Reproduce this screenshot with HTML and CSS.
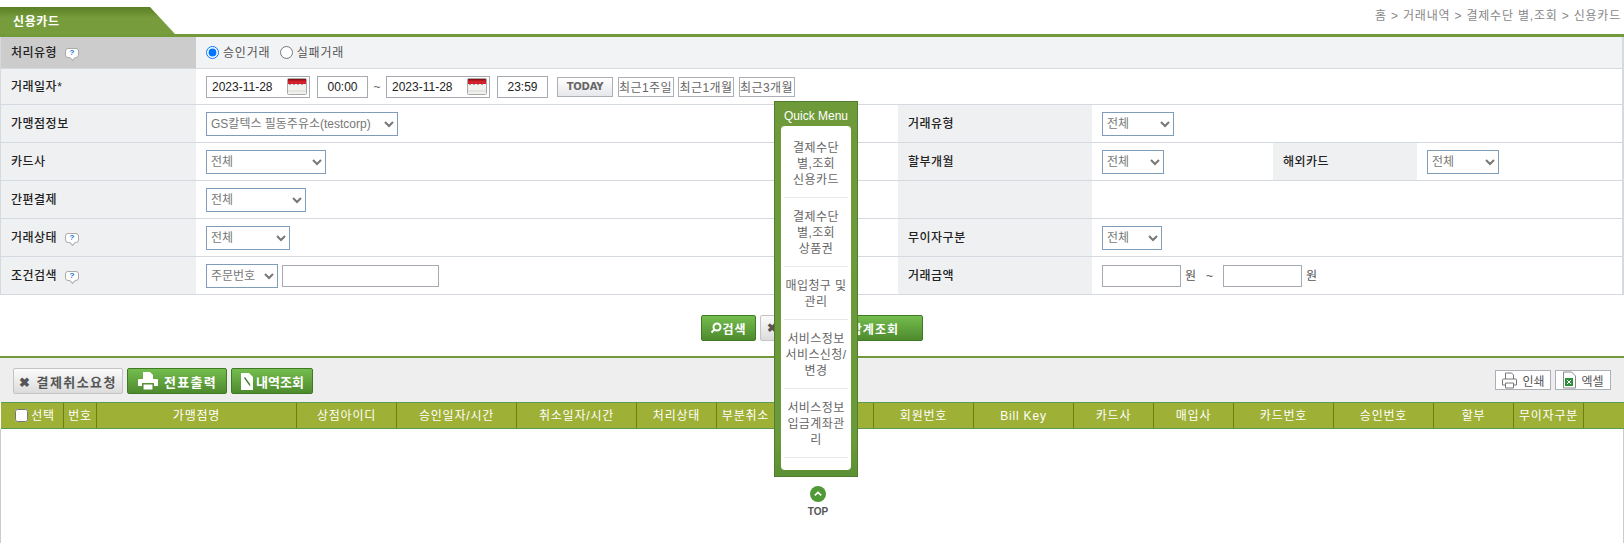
FILE: index.html
```html
<!DOCTYPE html>
<html lang="ko">
<head>
    <meta charset="UTF-8">
    <title>신용카드</title>
    <link rel="stylesheet" href="styles.css">
</head>
<body>
    <svg class="defs" width="0" height="0">
        <symbol id="cal" viewBox="0 0 20 17">
            <rect x=".5" y=".5" width="19" height="16" rx="1" fill="#f1f1ee" stroke="#aaa"/>
            <rect x="1" y="1" width="18" height="5" fill="#d3202a"/>
            <path d="M1 1h18v1.500H1z" fill="#8c1218"/>
            <path d="M3 6v1M7 6v1M11 6v1M15 6v1" stroke="#555"/>
            <path d="M1 13h18" stroke="#d8d8d4"/>
        </symbol>
    </svg>

    <div class="top-bar">
        <h1 class="tab">신용카드</h1>
        <div class="crumbs">홈 &gt; 거래내역 &gt; 결제수단 별,조회 &gt; 신용카드</div>
    </div>

    <table class="search-table">
        <colgroup>
            <col class="col-label"><col class="col-value"><col class="col-label2"><col class="col-value2"><col class="col-label3"><col>
        </colgroup>
        <tr class="row-first">
            <th class="th-first">처리유형 <span class="help">?</span></th>
            <td colspan="5" class="td-first">
                <label class="radio"><input type="radio" name="kind" checked>승인거래</label>
                <label class="radio"><input type="radio" name="kind">실패거래</label>
            </td>
        </tr>
        <tr class="row-date">
            <th>거래일자*</th>
            <td colspan="5">
                <div class="line">
                    <span class="date-box"><input type="text" value="2023-11-28"><svg class="cal"><use href="#cal"/></svg></span>
                    <input class="time" type="text" value="00:00">
                    <span class="tilde">~</span>
                    <span class="date-box"><input type="text" value="2023-11-28"><svg class="cal"><use href="#cal"/></svg></span>
                    <input class="time time-end" type="text" value="23:59">
                    <button class="today" type="button">TODAY</button>
                    <button class="recent" type="button">최근1주일</button>
                    <button class="recent" type="button">최근1개월</button>
                    <button class="recent" type="button">최근3개월</button>
                </div>
            </td>
        </tr>
        <tr>
            <th>가맹점정보</th>
            <td><select class="w192"><option>GS칼텍스 필동주유소(testcorp)</option></select></td>
            <th>거래유형</th>
            <td colspan="3"><select class="w72"><option>전체</option></select></td>
        </tr>
        <tr>
            <th>카드사</th>
            <td><select class="w120"><option>전체</option></select></td>
            <th>할부개월</th>
            <td><select class="w62"><option>전체</option></select></td>
            <th>해외카드</th>
            <td><select class="w72"><option>전체</option></select></td>
        </tr>
        <tr>
            <th>간편결제</th>
            <td><select class="w100"><option>전체</option></select></td>
            <th></th>
            <td colspan="3"></td>
        </tr>
        <tr>
            <th>거래상태 <span class="help">?</span></th>
            <td><select class="w84"><option>전체</option></select></td>
            <th>무이자구분</th>
            <td colspan="3"><select class="w60"><option>전체</option></select></td>
        </tr>
        <tr>
            <th>조건검색 <span class="help">?</span></th>
            <td>
                <div class="line">
                    <select class="w72"><option>주문번호</option></select>
                    <input class="keyword" type="text">
                </div>
            </td>
            <th>거래금액</th>
            <td colspan="3">
                <div class="line amount-line">
                    <input class="amount" type="text"><span>원</span>
                    <span class="amount-tilde">~</span>
                    <input class="amount" type="text"><span>원</span>
                </div>
            </td>
        </tr>
    </table>

    <div class="actions">
        <button class="btn green btn-search" type="button">
            <svg width="12" height="12" viewBox="0 0 12 12"><circle cx="7" cy="5" r="3.500" fill="none" stroke="#fff" stroke-width="2"/><path d="M4.500 7.500L1.500 10.500" stroke="#fff" stroke-width="2"/></svg>검색
        </button>
        <button class="btn gray btn-reset" type="button">✖</button>
        <button class="btn green btn-sum" type="button">합계조회</button>
    </div>

    <section class="result">
        <div class="toolbar">
            <button class="btn gray btn-cancel" type="button">✖ 결제취소요청</button>
            <button class="btn green btn-slip" type="button">
                <svg width="22" height="20" viewBox="0 0 22 20"><path d="M6 1h7l3 3v4H6z" fill="#fff"/><path d="M2 8h18a1 1 0 0 1 1 1v6h-4v-3H5v3H1V9a1 1 0 0 1 1-1z" fill="#fff"/><path d="M6 13h10v6H6z" fill="#fff" stroke="#4f8a30"/></svg>전표출력
            </button>
            <button class="btn green btn-list" type="button">
                <svg width="14" height="19" viewBox="0 0 14 19"><path d="M1 1h8l4 4v13H1z" fill="#fff"/><path d="M4 6l5 7 1.500 1.500-.5-2.500-5-7z" fill="#3e7a25"/></svg>내역조회
            </button>
            <div class="toolbar-right">
                <button class="small-btn" type="button">
                    <svg width="17" height="17" viewBox="0 0 17 17"><path d="M4.500 7V1h6l2 2v4M4.500 13h-3V8a1 1 0 0 1 1-1h12a1 1 0 0 1 1 1v5h-3M4.500 11h8v5h-8z" fill="#fff" stroke="#777"/></svg>인쇄
                </button>
                <button class="small-btn" type="button">
                    <svg width="15" height="18" viewBox="0 0 15 18"><path d="M1.500 1h8l4 4v12h-12z" fill="#fff" stroke="#888"/><rect x="3" y="7" width="8" height="8" fill="#2f8f3a"/><path d="M5 9l4 4M9 9l-4 4" stroke="#fff"/></svg>엑셀
                </button>
            </div>
        </div>

        <table class="grid">
            <colgroup>
                <col class="g63"><col class="g33"><col class="g200"><col class="g100"><col class="g120"><col class="g120"><col class="g80"><col class="g58"><col class="g99"><col class="g100"><col class="g100"><col class="g80"><col class="g80"><col class="g100"><col class="g100"><col class="g80"><col class="g70"><col>
            </colgroup>
            <tr>
                <th class="check-cell"><input type="checkbox">선택</th>
                <th>번호</th>
                <th>가맹점명</th>
                <th>상점아이디</th>
                <th>승인일자/시간</th>
                <th>취소일자/시간</th>
                <th>처리상태</th>
                <th>부분취소</th>
                <th></th>
                <th>회원번호</th>
                <th>Bill Key</th>
                <th>카드사</th>
                <th>매입사</th>
                <th>카드번호</th>
                <th>승인번호</th>
                <th>할부</th>
                <th>무이자구분</th>
                <th></th>
            </tr>
        </table>
        <div class="grid-body"></div>
    </section>

    <aside class="quick">
        <div class="quick-panel">
            <div class="quick-title">Quick Menu</div>
            <ul class="quick-list">
                <li>결제수단<br>별,조회<br>신용카드</li>
                <li>결제수단<br>별,조회<br>상품권</li>
                <li>매입청구 및<br>관리</li>
                <li>서비스정보<br>서비스신청/<br>변경</li>
                <li>서비스정보<br>입금계좌관<br>리</li>
            </ul>
        </div>
        <a class="to-top" href="#">
            <svg width="16" height="16" viewBox="0 0 16 16"><circle cx="8" cy="8" r="8" fill="#4f9a37"/><path d="M4.800 9.300L8 6.300l3.200 3" fill="none" stroke="#fff" stroke-width="1.600"/></svg>
            <span>TOP</span>
        </a>
    </aside>
</body>
</html>
```

FILE: styles.css
```css
* {
    box-sizing: border-box;
}
html, body {
    height: 100%;
}
body {
    margin: 0;
    font-family: "Liberation Sans", "Noto Sans CJK KR", sans-serif;
    font-size: 12px;
    line-height: 16px;
    color: #333;
    background: #fff;
    overflow: hidden;
    position: relative;
}
.defs {
    position: absolute;
}
input, select, button {
    font-family: inherit;
    font-size: 12px;
    margin: 0;
}

/* top */
.top-bar {
    display: flex;
    justify-content: space-between;
    align-items: flex-start;
    height: 37px;
    border-bottom: 3px solid #739a3a;
}
.tab {
    width: 175px;
    height: 27px;
    margin: 7px 0 0;
    padding: 7px 0 0 13px;
    font-size: 12px;
    line-height: 16px;
    letter-spacing: .6px;
    color: #fff;
    background: linear-gradient(#5b7f25, #769c3c 40%);
    clip-path: polygon(0 0, 150px 0, 100% 100%, 0 100%);
}
.crumbs {
    padding: 8px 3px 0 0;
    color: #888;
    letter-spacing: .8px;
}

/* search form */
.search-table {
    width: 100%;
    table-layout: fixed;
    border-collapse: separate;
    border-spacing: 0;
    border-left: 1px solid #d4dae0;
    border-right: 2px solid #d4dae0;
}
.col-label { width: 195px; }
.col-value { width: 702px; }
.col-label2 { width: 194px; }
.col-value2 { width: 181px; }
.col-label3 { width: 144px; }
.search-table tr {
    height: 38px;
}
.search-table .row-first {
    height: 32px;
}
.search-table .row-date {
    height: 36px;
}
.search-table th, .search-table td {
    padding: 0 0 0 10px;
    border-bottom: 1px solid #d4dae0;
    text-align: left;
    font-weight: normal;
}
.search-table th {
    padding-top: 1px;
    background: #eff0f2;
    font-weight: 500;
    letter-spacing: .5px;
    color: #222;
}
.search-table .th-first {
    background: #ccc;
}
.search-table .td-first {
    padding-top: 3px;
    background: #f2f3f5;
}
.help {
    display: inline-block;
    position: relative;
    width: 14px;
    height: 10px;
    margin-left: 4px;
    border: 1px solid #aaa;
    border-radius: 3px;
    background: #fff;
    font-family: "Liberation Sans", sans-serif;
    font-size: 8px;
    font-weight: bold;
    line-height: 8px;
    letter-spacing: 0;
    text-align: center;
    color: #0a6fd0;
    vertical-align: 2px;
}
.help::after {
    content: "";
    position: absolute;
    left: 4px;
    bottom: -3px;
    width: 4px;
    height: 4px;
    border-right: 1px solid #aaa;
    border-bottom: 1px solid #aaa;
    background: #fff;
    transform: rotate(45deg);
}
.radio {
    display: inline-flex;
    align-items: center;
    margin-right: 6px;
    color: #555;
    letter-spacing: .8px;
}
.radio input {
    width: 13px;
    height: 13px;
    margin: 0 4px 0 0;
}
.line {
    display: flex;
    align-items: center;
}
.date-box {
    display: flex;
    align-items: center;
    width: 104px;
    height: 22px;
    border: 1px solid #a5abb0;
    background: #fff;
}
.date-box input {
    width: 80px;
    height: 20px;
    padding: 0 0 0 5px;
    border: 0;
    color: #222;
}
.cal {
    width: 20px;
    height: 17px;
}
.time {
    width: 51px;
    height: 22px;
    margin-left: 7px;
    padding: 0;
    border: 1px solid #a5abb0;
    text-align: center;
    color: #222;
}
.tilde {
    width: 18px;
    text-align: center;
    color: #666;
}
.time-end {
    margin-right: 9px;
}
.today, .recent {
    width: 56px;
    height: 20px;
    margin-right: 4.5px;
    padding: 0;
    border: 1px solid #aab0b5;
    color: #666;
}
.today {
    background: linear-gradient(#fff, #e6e7ea);
    font-family: "DejaVu Sans", sans-serif;
    font-size: 10px;
    font-weight: bold;
    letter-spacing: -.2px;
}
.recent {
    background: #fff;
    letter-spacing: .4px;
}
select {
    height: 24px;
    padding: 0;
    border: 1px solid #7f9db9;
    background: #fff;
    color: #777;
}
.w192 { width: 192px; }
.w120 { width: 120px; }
.w100 { width: 100px; }
.w84 { width: 84px; }
.w72 { width: 72px; }
.w62 { width: 62px; }
.w60 { width: 60px; }
.keyword {
    width: 157px;
    height: 22px;
    margin-left: 4px;
    border: 1px solid #a5abb0;
}
.amount {
    width: 79px;
    height: 22px;
    border: 1px solid #a5abb0;
}
.amount-line {
    gap: 4px;
    color: #555;
}
.amount-tilde {
    margin: 0 6px;
}

/* buttons */
.actions {
    display: flex;
    justify-content: center;
    gap: 4px;
    padding-top: 20px;
    height: 61px;
}
.btn {
    display: inline-flex;
    align-items: center;
    justify-content: center;
    height: 26px;
    padding: 0;
    border-radius: 2px;
    font-weight: bold;
    letter-spacing: 1px;
}
.btn.green {
    border: 1px solid #3f7a24;
    background: linear-gradient(#74bd4e, #4e8a2e);
    color: #fff;
}
.btn.gray {
    border: 1px solid #c4c4c4;
    background: linear-gradient(#fbfbfb, #dcdcdc);
    color: #555;
}
.btn-search { width: 55px; }
.btn-reset {
    width: 50px;
    justify-content: flex-start;
    padding-left: 6px;
}
.btn-sum {
    width: 109px;
    justify-content: flex-end;
    padding-right: 23px;
}

/* result */
.result {
    border-top: 2px solid #739a3a;
}
.toolbar {
    display: flex;
    align-items: flex-start;
    gap: 4px;
    height: 44px;
    padding: 10px 13px 0 13px;
    background: #eee;
}
.toolbar .btn {
    font-size: 13px;
}
.toolbar .btn-cancel { width: 110px; letter-spacing: 1.4px; }
.toolbar .btn-slip { width: 100px; gap: 5px; letter-spacing: 1.3px; }
.toolbar .btn-list { width: 82px; gap: 2px; letter-spacing: 0; }
.toolbar-right {
    display: flex;
    gap: 4px;
    margin-left: auto;
    padding-top: 2px;
}
.small-btn {
    display: inline-flex;
    align-items: center;
    justify-content: center;
    gap: 4px;
    width: 56px;
    height: 20px;
    padding: 0;
    border: 1px solid #aab0b5;
    background: #fff;
    color: #555;
}
.grid {
    width: calc(100% - 1px);
    margin-left: 1px;
    table-layout: fixed;
    border-collapse: separate;
    border-spacing: 0;
    border-top: 1px solid #5c9a50;
    border-bottom: 1px solid #5c9a50;
    background: #9fb036;
}
.g63 { width: 63px; }
.g33 { width: 33px; }
.g200 { width: 200px; }
.g100 { width: 100px; }
.g120 { width: 120px; }
.g99 { width: 99px; }
.g80 { width: 80px; }
.g70 { width: 70px; }
.g58 { width: 58px; }
.grid th {
    height: 25px;
    padding: 0;
    border-right: 1px solid #6e7f10;
    font-weight: normal;
    color: #fff;
    letter-spacing: .8px;
    white-space: nowrap;
}
.grid th:last-child {
    border-right: 0;
}
.grid .check-cell {
    padding-left: 6px;
}
.check-cell input {
    width: 13px;
    height: 13px;
    margin: 0 3px 0 0;
    vertical-align: -2px;
}
.grid-body {
    height: 115px;
    border-left: 1px solid #ccc;
    border-right: 1px solid #ccc;
}

/* floating quick menu */
.quick {
    position: absolute;
    left: 774px;
    top: 101px;
    width: 84px;
}
.quick-panel {
    padding: 0 6px 6px;
    border: 1px solid #4f7f2c;
    background: linear-gradient(#6f9a3a, #6a9a3a 90%, #5c9036);
}
.quick-title {
    height: 24px;
    padding-top: 6px;
    text-align: center;
    color: #fff;
}
.quick-list {
    margin: 0;
    padding: 3px 3px 12px;
    list-style: none;
    background: #fff;
    border-radius: 4px;
}
.quick-list li {
    padding: 11px 0 9px;
    border-bottom: 1px solid #e8e8e8;
    text-align: center;
    color: #666;
    letter-spacing: .4px;
    white-space: nowrap;
}
.to-top {
    display: flex;
    flex-direction: column;
    align-items: center;
    gap: 3px;
    margin: 9px 0 0 4px;
    font-size: 10px;
    font-weight: bold;
    line-height: 13px;
    color: #555;
    text-decoration: none;
}
```
